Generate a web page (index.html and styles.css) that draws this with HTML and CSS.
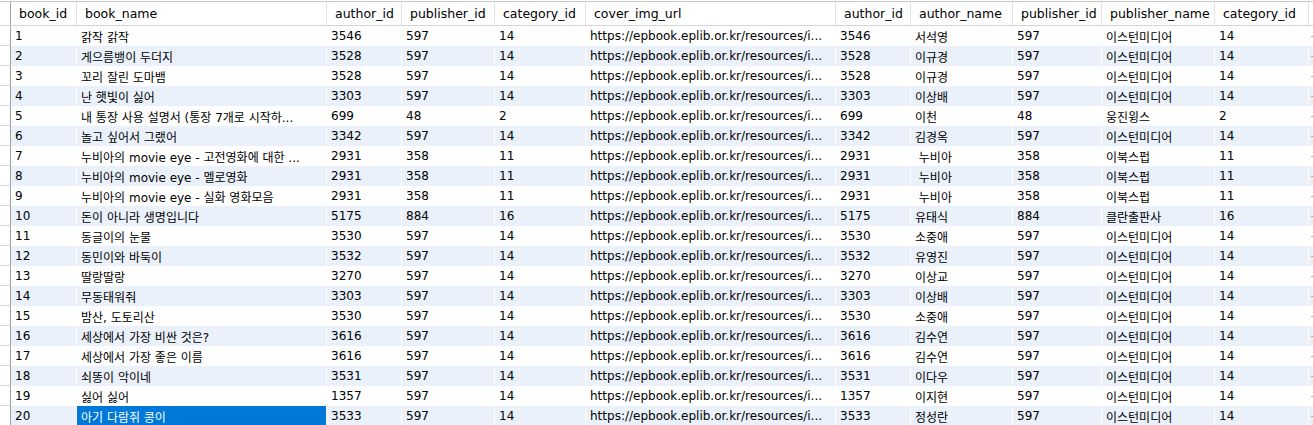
FILE: index.html
```html
<!DOCTYPE html>
<html>
<head>
<meta charset="utf-8">
<link rel="stylesheet" href="styles.css">
</head>
<body>
<div class="grid">
  <div class="row head">
    <div class="gut"></div>
    <div class="c">book_id</div><div class="c">book_name</div><div class="c">author_id</div><div class="c">publisher_id</div><div class="c">category_id</div><div class="c">cover_img_url</div><div class="c">author_id</div><div class="c">author_name</div><div class="c">publisher_id</div><div class="c">publisher_name</div><div class="c">category_id</div><div class="c last"></div>
  </div>
  <div id="body"></div>
</div>
<script src="app.js"></script>
</body>
</html>
```
FILE: app.js
```js
const U = "https://epbook.eplib.or.kr/resources/i...";
const E = "이스턴미디어";
const rows = [
  [1,"갉작 갉작",3546,597,14,3546,"서석영",597,E,14],
  [2,"게으름뱅이 두더지",3528,597,14,3528,"이규경",597,E,14],
  [3,"꼬리 잘린 도마뱀",3528,597,14,3528,"이규경",597,E,14],
  [4,"난 햇빛이 싫어",3303,597,14,3303,"이상배",597,E,14],
  [5,"내 통장 사용 설명서 (통장 7개로 시작하...",699,48,2,699,"이천",48,"웅진윙스",2],
  [6,"놀고 싶어서 그랬어",3342,597,14,3342,"김경옥",597,E,14],
  [7,"누비아의 movie eye - 고전영화에 대한 ...",2931,358,11,2931," 누비아",358,"이북스펍",11],
  [8,"누비아의 movie eye - 멜로영화",2931,358,11,2931," 누비아",358,"이북스펍",11],
  [9,"누비아의 movie eye - 실화 영화모음",2931,358,11,2931," 누비아",358,"이북스펍",11],
  [10,"돈이 아니라 생명입니다",5175,884,16,5175,"유태식",884,"클란출판사",16],
  [11,"동글이의 눈물",3530,597,14,3530,"소중애",597,E,14],
  [12,"동민이와 바둑이",3532,597,14,3532,"유영진",597,E,14],
  [13,"딸랑딸랑",3270,597,14,3270,"이상교",597,E,14],
  [14,"무동태워줘",3303,597,14,3303,"이상배",597,E,14],
  [15,"밤산, 도토리산",3530,597,14,3530,"소중애",597,E,14],
  [16,"세상에서 가장 비싼 것은?",3616,597,14,3616,"김수연",597,E,14],
  [17,"세상에서 가장 좋은 이름",3616,597,14,3616,"김수연",597,E,14],
  [18,"쇠똥이 악이네",3531,597,14,3531,"이다우",597,E,14],
  [19,"싫어 싫어",1357,597,14,1357,"이지현",597,E,14],
  [20,"아기 다람쥐 콩이",3533,597,14,3533,"정성란",597,E,14]
];
const body = document.getElementById("body");
rows.forEach((r, i) => {
  const row = document.createElement("div");
  row.className = "row data" + (i % 2 === 1 ? " alt" : "");
  const vals = [r[0], r[1], r[2], r[3], r[4], U, r[5], r[6], r[7], r[8], r[9]];
  let html = '<div class="gut"></div>';
  vals.forEach((v, j) => {
    let cls = "c";
    if (i === 19 && j === 1) cls += " sel";
    html += '<div class="' + cls + '">' + String(v).replace(/ /g, "&nbsp;").replace(/&nbsp;(?=\S)/g, (m, off, s) => off === 0 ? m : " ") + '</div>';
  });
  html += '<div class="c last"><span class="tick"></span></div>';
  row.innerHTML = html;
  body.appendChild(row);
});
```
FILE: styles.css
```css
html, body {
  margin: 0;
  padding: 0;
  background: #ffffff;
}
body {
  padding-top: 1px;
  font-family: "DejaVu Sans", "Noto Sans CJK KR", sans-serif;
  font-size: 12px;
  color: #000000;
  overflow: hidden;
}
.grid {
  border-top: 1px solid #c8c8c8;
}
.row {
  display: grid;
  grid-template-columns: 11px 66px 250px 75px 93px 91px 250px 75px 102px 89px 113px 94px 1fr;
}
.head {
  height: 23px;
  border-bottom: 1px solid #d5d5d5;
}
.data {
  height: 20px;
}
.alt {
  background: #eaf1fb;
}
.gut {
  border-right: 1px solid #a0a0a0;
  background: #ffffff;
}
.data .gut {
  border-bottom: 1px solid #d8d8d8;
  box-sizing: border-box;
}
.c {
  box-sizing: border-box;
  border-right: 1px solid #ffffff;
  white-space: nowrap;
  overflow: hidden;
  display: flex;
  align-items: center;
  padding-left: 4px;
}
.head .c {
  border-right: 1px solid #e3e3e3;
  padding-left: 8px;
  font-size: 12.5px;
}
.c.last {
  border-right: none;
  padding-left: 0;
}
.sel {
  background: #0078d7;
  color: #ffffff;
}
.tick {
  display: block;
  width: 3px;
  height: 1px;
  margin-left: 2px;
  background: #f0a040;
}
```
